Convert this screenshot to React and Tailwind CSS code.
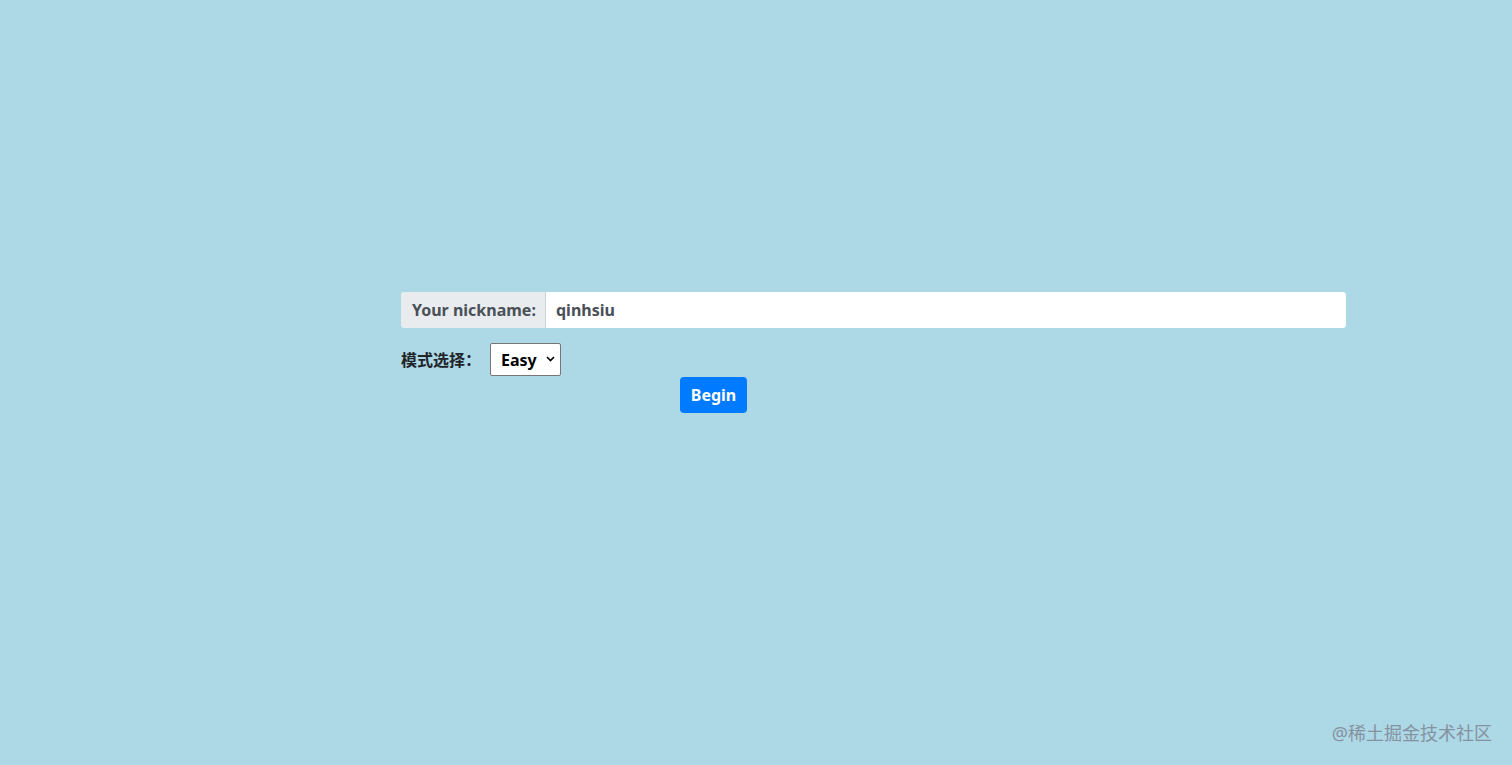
import { useState } from 'react';

// Login panel: nickname input, mode select, begin button
export default function App() {
  const [nickname, setNickname] = useState('qinhsiu');
  const [mode, setMode] = useState('easy');

  return (
    <div
      className="relative w-full h-[765px] bg-[#add8e6] overflow-hidden"
      style={{ fontFamily: '"Noto Sans", "Noto Sans CJK SC", sans-serif' }}
    >
      <div className="pt-[292px] pl-[401px] w-[1346px]">
        {/* Nickname */}
        <div className="flex h-9 rounded bg-white">
          <span className="flex items-center w-[145px] pl-[11px] bg-[#e9ecef] border-r border-[#ced4da] rounded-l text-[16px] font-bold text-[#495057]">
            Your nickname:
          </span>
          <input
            value={nickname}
            onChange={e => setNickname(e.target.value)}
            className="flex-1 px-[10px] rounded-r text-[16px] font-bold text-[#495057] outline-none bg-white"
          />
        </div>

        {/* Mode */}
        <div className="flex items-center mt-[15px]">
          <span className="w-[89px] text-[16px] font-bold text-[#212529]">模式选择：</span>
          <div className="relative">
            <select
              value={mode}
              onChange={e => setMode(e.target.value)}
              className="appearance-none w-[71px] h-[33px] pl-[10px] border border-[#767676] rounded-[2px] bg-white text-[16px] font-bold text-black outline-none"
            >
              <option value="easy">Easy</option>
              <option value="hard">Hard</option>
            </select>
            <svg className="absolute right-[6px] top-[13px] pointer-events-none" width="9" height="6" viewBox="0 0 9 6">
              <path d="M1 1l3.5 3.5L8 1" fill="none" stroke="#000" strokeWidth="1.6" />
            </svg>
          </div>
        </div>

        {/* Begin */}
        <div className="pl-[279px] mt-px">
          <button className="h-9 w-[67px] rounded bg-[#007bff] text-white text-[16px] font-bold">
            Begin
          </button>
        </div>
      </div>

      <div className="absolute right-[20px] bottom-[18px] text-[18px] text-[#8592a0]">
        @稀土掘金技术社区
      </div>
    </div>
  );
}
